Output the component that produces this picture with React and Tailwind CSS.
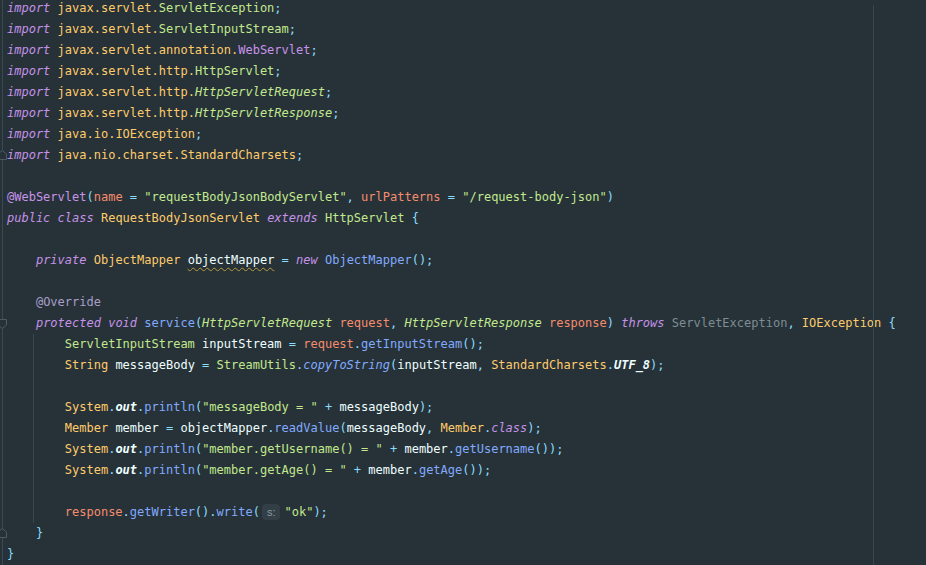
import React from 'react';

const C = {
  k: 'text-[#c792ea] italic',
  y: 'text-[#ffcb6b]',
  g: 'text-[#c3e88d]',
  gi: 'text-[#c3e88d] italic',
  p: 'text-[#89ddff]',
  b: 'text-[#82aaff]',
  bi: 'text-[#82aaff] italic',
  o: 'text-[#f78c6c]',
  w: 'text-[#eeffff]',
  wb: 'text-[#eeffff] italic font-bold',
  gr: 'text-[#7f8c94]',
  an: 'text-[#c792ea]',
  ov: 'text-[#a99ec9]',
  typo: 'text-[#eeffff] underline decoration-wavy decoration-[#b89a3e] underline-offset-[3px] decoration-1',
};

const imp = (pkg, cls, style) => [['k', 'import'], ['', ' '], ['y', pkg], [style, cls], ['p', ';']];
const println = (str, rest) => [
  ['', '        '], ['y', 'System'], ['p', '.'], ['wb', 'out'], ['p', '.'], ['b', 'println'], ['p', '('],
  ['g', str], ['p', ' + '], ...rest,
];

const lines = [
  imp('javax.servlet.', 'ServletException', 'g'),
  imp('javax.servlet.', 'ServletInputStream', 'g'),
  imp('javax.servlet.annotation.', 'WebServlet', 'an'),
  imp('javax.servlet.http.', 'HttpServlet', 'g'),
  imp('javax.servlet.http.', 'HttpServletRequest', 'gi'),
  imp('javax.servlet.http.', 'HttpServletResponse', 'gi'),
  imp('java.io.', 'IOException', 'y'),
  imp('java.nio.charset.', 'StandardCharsets', 'y'),
  [],
  [['an', '@WebServlet'], ['p', '('], ['o', 'name'], ['p', ' = '], ['g', '"requestBodyJsonBodyServlet"'], ['p', ', '], ['o', 'urlPatterns'], ['p', ' = '], ['g', '"/request-body-json"'], ['p', ')']],
  [['k', 'public class'], ['', ' '], ['y', 'RequestBodyJsonServlet'], ['', ' '], ['k', 'extends'], ['', ' '], ['g', 'HttpServlet'], ['p', ' {']],
  [],
  [['', '    '], ['k', 'private'], ['', ' '], ['y', 'ObjectMapper'], ['', ' '], ['typo', 'objectMapper'], ['p', ' = '], ['k', 'new'], ['', ' '], ['b', 'ObjectMapper'], ['p', '();']],
  [],
  [['', '    '], ['ov', '@Override']],
  [['', '    '], ['k', 'protected void'], ['', ' '], ['b', 'service'], ['p', '('], ['gi', 'HttpServletRequest'], ['', ' '], ['o', 'request'], ['p', ', '], ['gi', 'HttpServletResponse'], ['', ' '], ['o', 'response'], ['p', ') '], ['k', 'throws'], ['', ' '], ['gr', 'ServletException'], ['p', ', '], ['y', 'IOException'], ['p', ' {']],
  [['', '        '], ['g', 'ServletInputStream'], ['w', ' inputStream'], ['p', ' = '], ['o', 'request'], ['p', '.'], ['b', 'getInputStream'], ['p', '();']],
  [['', '        '], ['y', 'String'], ['w', ' messageBody'], ['p', ' = '], ['g', 'StreamUtils'], ['p', '.'], ['bi', 'copyToString'], ['p', '('], ['w', 'inputStream'], ['p', ', '], ['y', 'StandardCharsets'], ['p', '.'], ['wb', 'UTF_8'], ['p', ');']],
  [],
  println('"messageBody = "', [['w', 'messageBody'], ['p', ');']]),
  [['', '        '], ['y', 'Member'], ['w', ' member'], ['p', ' = '], ['w', 'objectMapper'], ['p', '.'], ['b', 'readValue'], ['p', '('], ['w', 'messageBody'], ['p', ', '], ['y', 'Member'], ['p', '.'], ['k', 'class'], ['p', ');']],
  println('"member.getUsername() = "', [['w', 'member'], ['p', '.'], ['b', 'getUsername'], ['p', '());']]),
  println('"member.getAge() = "', [['w', 'member'], ['p', '.'], ['b', 'getAge'], ['p', '());']]),
  [],
  [['', '        '], ['o', 'response'], ['p', '.'], ['b', 'getWriter'], ['p', '().'], ['b', 'write'], ['p', '('], ['hint', 's:'], ['g', '"ok"'], ['p', ');']],
  [['', '    '], ['p', '}']],
  [['p', '}']],
];

// fold markers in the gutter: 'start' points down, 'end' points up
const markers = { 7: 'end', 15: 'start', 25: 'end' };

function Gutter({ marker }) {
  return (
    <svg width="7" height="21" className="shrink-0 block">
      <line x1="2.5" y1="0" x2="2.5" y2="21" stroke="#3a4a53" strokeWidth="1" />
      {marker === 'start' && (
        <path d="M-2 6.5 H6.5 V12 L2.25 15.5 L-2 12 Z" fill="#263238" stroke="#4b5c66" strokeWidth="1" />
      )}
      {marker === 'end' && (
        <path d="M-2 9 L2.25 5.5 L6.5 9 V14.5 H-2 Z" fill="#263238" stroke="#4b5c66" strokeWidth="1" />
      )}
    </svg>
  );
}

function CodeLine({ tokens }) {
  return (
    <div className="h-[21px] leading-[21px] whitespace-pre text-[#eeffff]">
      {tokens.map(([t, text], i) =>
        t === 'hint' ? (
          <span
            key={i}
            className="inline-block align-middle ml-[2px] mr-[4px] px-[5px] h-[16px] leading-[16px] rounded-[4px] bg-[#323f47] text-[#8c9aa2] text-[11px] font-['Liberation_Sans',sans-serif] not-italic"
          >
            {text}
          </span>
        ) : (
          <span key={i} className={C[t] || ''}>{text}</span>
        )
      )}
    </div>
  );
}

export default function App() {
  const head = lines.slice(0, 16);
  const body = lines.slice(16, 25);
  const tail = lines.slice(25);

  return (
    <div className="relative h-[565px] w-full overflow-hidden bg-[#263238] font-['DejaVu_Sans_Mono',monospace] text-[12px]">
      <div className="flex -mt-[2.5px]">
        <div className="flex flex-col">
          {lines.map((_, i) => (
            <Gutter key={i} marker={markers[i]} />
          ))}
        </div>
        <div className="flex flex-col">
          {head.map((l, i) => <CodeLine key={i} tokens={l} />)}
          <div className="relative">
            <div className="absolute left-[26px] top-0 bottom-0 w-px bg-[#37474f]" />
            {body.map((l, i) => <CodeLine key={i} tokens={l} />)}
          </div>
          {tail.map((l, i) => <CodeLine key={i} tokens={l} />)}
        </div>
      </div>
      {/* right margin guide */}
      <div className="absolute left-[873px] top-[5px] bottom-0 w-px bg-[#37474f]" />
    </div>
  );
}
